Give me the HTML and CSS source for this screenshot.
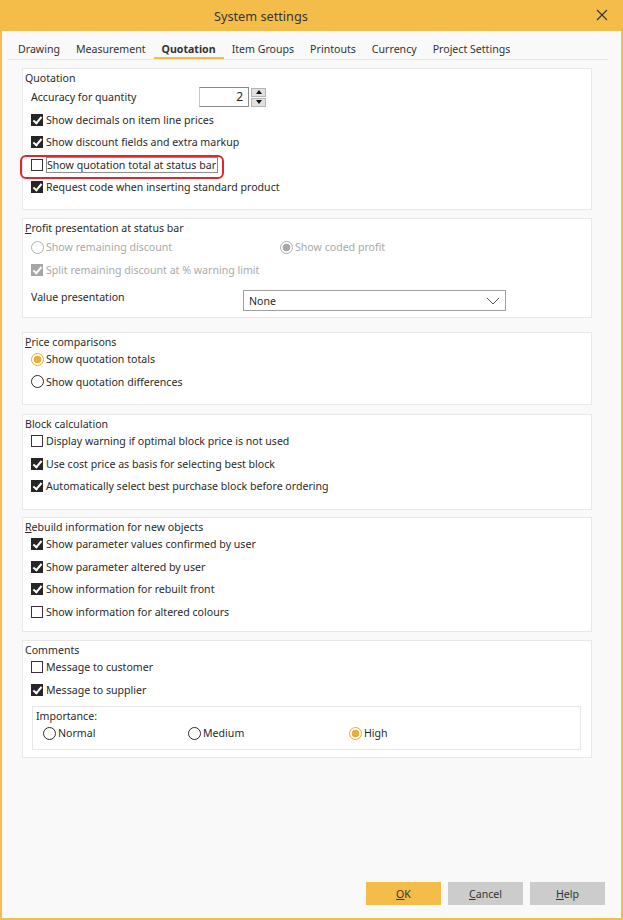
FILE: index.html
```html
<!DOCTYPE html>
<html lang="en">
<head>
    <meta charset="UTF-8">
    <meta name="viewport" content="width=device-width, initial-scale=1.0">
    <title>System settings</title>
    <link rel="stylesheet" href="styles.css">
</head>
<body>
    <div class="window">
        <header class="titlebar">
            <span class="title">System settings</span>
            <span class="close">
                <svg width="12" height="12" viewBox="0 0 12 12"><path d="M1 1 L11 11 M11 1 L1 11" stroke="#333" stroke-width="1.1" fill="none"/></svg>
            </span>
        </header>

        <div class="content">
            <nav class="tabs">
                <a>Drawing</a>
                <a>Measurement</a>
                <a class="active">Quotation</a>
                <a>Item Groups</a>
                <a>Printouts</a>
                <a>Currency</a>
                <a>Project Settings</a>
            </nav>

            <div class="groups">
                <section class="group g-quotation">
                    <div class="group-title">Quotation</div>
                    <div class="row first">
                        <span class="label-spin">Accuracy for quantity</span>
                        <div class="spin">
                            <div class="spin-input">2</div>
                            <div class="spin-btns">
                                <span class="spin-btn"><i class="tri up"></i></span>
                                <span class="spin-btn"><i class="tri down"></i></span>
                            </div>
                        </div>
                    </div>
                    <div class="row"><span class="check on"></span>Show decimals on item line prices</div>
                    <div class="row"><span class="check on"></span>Show discount fields and extra markup</div>
                    <div class="row marked"><span class="check"></span><span class="focus">Show quotation total at status bar</span></div>
                    <div class="row"><span class="check on"></span>Request code when inserting standard product</div>
                </section>

                <section class="group g-profit">
                    <div class="group-title"><u>P</u>rofit presentation at status bar</div>
                    <div class="row first disabled">
                        <span class="radio-item wide"><span class="radio"></span>Show remaining discount</span>
                        <span class="radio-item"><span class="radio on"></span>Show coded profit</span>
                    </div>
                    <div class="row disabled"><span class="check on"></span>Split remaining discount at % warning limit</div>
                    <div class="row row-combo">
                        <span class="label-combo">Value presentation</span>
                        <div class="combo">
                            <span>None</span>
                            <svg width="14" height="8" viewBox="0 0 14 8"><path d="M1 1 L7 7 L13 1" stroke="#555" stroke-width="1" fill="none"/></svg>
                        </div>
                    </div>
                </section>

                <section class="group g-price">
                    <div class="group-title"><u>P</u>rice comparisons</div>
                    <div class="row"><span class="radio on"></span>Show quotation totals</div>
                    <div class="row"><span class="radio"></span>Show quotation differences</div>
                </section>

                <section class="group g-block">
                    <div class="group-title">Block calculation</div>
                    <div class="row"><span class="check"></span>Display warning if optimal block price is not used</div>
                    <div class="row"><span class="check on"></span>Use cost price as basis for selecting best block</div>
                    <div class="row"><span class="check on"></span>Automatically select best purchase block before ordering</div>
                </section>

                <section class="group g-rebuild">
                    <div class="group-title"><u>R</u>ebuild information for new objects</div>
                    <div class="row"><span class="check on"></span>Show parameter values confirmed by user</div>
                    <div class="row"><span class="check on"></span>Show parameter altered by user</div>
                    <div class="row"><span class="check on"></span>Show information for rebuilt front</div>
                    <div class="row"><span class="check"></span>Show information for altered colours</div>
                </section>

                <section class="group g-comments">
                    <div class="group-title">Comments</div>
                    <div class="row"><span class="check"></span>Message to customer</div>
                    <div class="row"><span class="check on"></span>Message to supplier</div>
                    <div class="group inner">
                        <div class="group-title">Importance:</div>
                        <div class="row">
                            <span class="radio-item imp-normal"><span class="radio"></span>Normal</span>
                            <span class="radio-item imp-medium"><span class="radio"></span>Medium</span>
                            <span class="radio-item"><span class="radio on"></span>High</span>
                        </div>
                    </div>
                </section>
            </div>

            <div class="buttons">
                <button class="btn primary"><u>O</u>K</button>
                <button class="btn"><u>C</u>ancel</button>
                <button class="btn"><u>H</u>elp</button>
            </div>
        </div>
    </div>
</body>
</html>
```

FILE: styles.css
```css
/* Reset */
* { margin: 0; padding: 0; box-sizing: border-box; }
body { font-family: "Noto Sans", Arial, sans-serif; font-size: 10.6px; color: #2a2a2a; background: #fff; }

.window { width: 623px; height: 920px; display: flex; flex-direction: column; border: 2px solid #f4bd4a; border-top: none; background: #f9f9f9; }

/* Title bar */
.titlebar { height: 31px; margin: 0 -2px; background: #f4bd4a; display: flex; align-items: center; position: relative; }
.titlebar .title { margin-left: 214px; font-size: 12.7px; color: #3a3530; }
.titlebar .close { position: absolute; right: 15px; top: 9px; width: 12px; height: 12px; }

.content { flex: 1; display: flex; flex-direction: column; }

/* Tabs */
.tabs { display: flex; margin: 0 13px 0 6px; padding: 0 0 0 2px; border-bottom: 1px solid #e6e6e6; height: 29px; }
.tabs a { padding: 10px 8px 0; color: #333; line-height: 16px; border-bottom: 2px solid transparent; }
.tabs a.active { font-weight: bold; border-bottom-color: #f4bd4a; }

/* Group boxes */
.groups { padding: 8px 0 0 20px; width: 590px; }
.group { background: #fff; border: 1px solid #e8e8e8; padding: 0 0 0 8px; }
.group-title { line-height: 16px; height: 15px; padding-top: 1px; margin-left: -6px; color: #2a2a2a; }
.group-title u { text-decoration: underline; }

.g-quotation { height: 142px; margin-bottom: 8px; }
.g-profit { height: 100px; margin-bottom: 14px; }
.g-price { height: 73px; margin-bottom: 9px; }
.g-block { height: 96px; margin-bottom: 7px; }
.g-rebuild { height: 115px; margin-bottom: 8px; }
.g-comments { height: 118px; }

.group.inner { margin: 5px 10px 0 1px; height: 44px; padding-left: 10px; }
.group.inner .group-title { margin-left: -7px; }

.row { height: 22.5px; display: flex; align-items: center; position: relative; }
.row.first { margin-top: 2px; }
.row.disabled { color: #a9a9a9; }

/* Checkbox */
.check { width: 12px; height: 12px; border: 1px solid #3b2e3f; background: #fff; margin-right: 3px; position: relative; flex: none; }
.check.on { background: #262626; border-color: #262626; }
.check.on::after { content: ""; position: absolute; left: 3px; top: 0px; width: 3px; height: 7px; border: solid #fff; border-width: 0 2px 2px 0; transform: rotate(40deg); }
.disabled .check.on { background: #a6a6a6; border-color: #a6a6a6; }

/* Radio */
.radio { width: 13px; height: 13px; border: 1px solid #2e2e2e; border-radius: 50%; background: #fff; margin-right: 2px; flex: none; }
.radio.on { border-color: #e2aa3a; background: radial-gradient(circle, #e8ae3e 0 3.5px, #fff 4.2px); }
.disabled .radio { border-color: #b0b0b0; }
.disabled .radio.on { background: radial-gradient(circle, #a8a8a8 0 3.5px, #fff 4.2px); }
.radio-item { display: flex; align-items: center; }
.radio-item.wide { width: 249px; }
.imp-normal { width: 145px; }
.imp-medium { width: 161px; }

/* Spinner */
.label-spin { width: 168px; }
.spin { display: flex; align-items: center; }
.spin-input { width: 50px; height: 20px; border: 1px solid #8a8a8a; border-left-color: #b8cce0; text-align: right; padding-right: 5px; line-height: 18px; font-size: 12px; }
.spin-btns { display: flex; flex-direction: column; gap: 1px; margin-left: 2px; }
.spin-btn { width: 15px; height: 9px; background: #e1e1e1; border: 1px solid #b4b4b4; display: flex; align-items: center; justify-content: center; }
.tri { width: 0; height: 0; border-left: 3.5px solid transparent; border-right: 3.5px solid transparent; }
.tri.up { border-bottom: 4px solid #111; }
.tri.down { border-top: 4px solid #111; }

/* Combo box */
.row-combo { height: 32px; align-items: flex-start; padding-top: 8px; }
.label-combo { width: 212px; line-height: 16px; }
.combo { width: 263px; height: 21px; border: 1px solid #a0a0a0; background: #fff; display: flex; align-items: center; justify-content: space-between; padding: 0 5px 0 5px; margin-top: 1px; }

/* Highlight of the quotation total option */
.marked::before { content: ""; position: absolute; left: -11px; top: 1px; width: 200px; height: 20px; border: 2px solid #e3262c; border-radius: 6px; }
.focus { border: 1px solid #8c8c8c; padding: 0 1px 0 0; line-height: 14px; }

/* Buttons */
.buttons { margin-top: auto; display: flex; justify-content: flex-end; gap: 7px; padding: 0 16px 13px 0; }
.btn { width: 75px; height: 23px; border: none; background: #cccccc; font-family: inherit; font-size: 10.6px; color: #333; }
.btn.primary { background: #f4bd4a; }
```
